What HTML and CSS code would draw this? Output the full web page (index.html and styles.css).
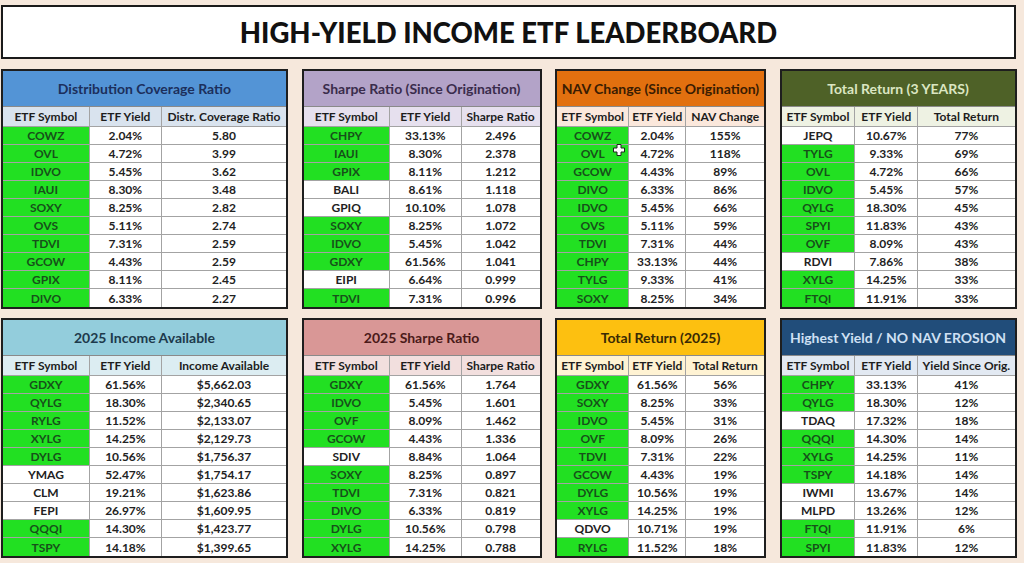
FILE: index.html
```html
<!DOCTYPE html>
<html>
<head>
<meta charset="utf-8">
<link rel="stylesheet" href="styles.css">
</head>
<body>
<div class="page">
  <header class="title-box"><h1>HIGH-YIELD INCOME ETF LEADERBOARD</h1></header>
  <main class="board">
    <section class="card c1 blue">
      <h2>Distribution Coverage Ratio</h2>
      <table>
        <tr class="th"><th>ETF Symbol</th><th>ETF Yield</th><th>Distr. Coverage Ratio</th></tr>
        <tr><td class="g">COWZ</td><td>2.04%</td><td>5.80</td></tr>
        <tr><td class="g">OVL</td><td>4.72%</td><td>3.99</td></tr>
        <tr><td class="g">IDVO</td><td>5.45%</td><td>3.62</td></tr>
        <tr><td class="g">IAUI</td><td>8.30%</td><td>3.48</td></tr>
        <tr><td class="g">SOXY</td><td>8.25%</td><td>2.82</td></tr>
        <tr><td class="g">OVS</td><td>5.11%</td><td>2.74</td></tr>
        <tr><td class="g">TDVI</td><td>7.31%</td><td>2.59</td></tr>
        <tr><td class="g">GCOW</td><td>4.43%</td><td>2.59</td></tr>
        <tr><td class="g">GPIX</td><td>8.11%</td><td>2.45</td></tr>
        <tr><td class="g">DIVO</td><td>6.33%</td><td>2.27</td></tr>
      </table>
    </section>
    <section class="card c2 lavender">
      <h2>Sharpe Ratio (Since Origination)</h2>
      <table>
        <tr class="th"><th>ETF Symbol</th><th>ETF Yield</th><th>Sharpe Ratio</th></tr>
        <tr><td class="g">CHPY</td><td>33.13%</td><td>2.496</td></tr>
        <tr><td class="g">IAUI</td><td>8.30%</td><td>2.378</td></tr>
        <tr><td class="g">GPIX</td><td>8.11%</td><td>1.212</td></tr>
        <tr><td>BALI</td><td>8.61%</td><td>1.118</td></tr>
        <tr><td>GPIQ</td><td>10.10%</td><td>1.078</td></tr>
        <tr><td class="g">SOXY</td><td>8.25%</td><td>1.072</td></tr>
        <tr><td class="g">IDVO</td><td>5.45%</td><td>1.042</td></tr>
        <tr><td class="g">GDXY</td><td>61.56%</td><td>1.041</td></tr>
        <tr><td>EIPI</td><td>6.64%</td><td>0.999</td></tr>
        <tr><td class="g">TDVI</td><td>7.31%</td><td>0.996</td></tr>
      </table>
    </section>
    <section class="card c3 orange">
      <h2>NAV Change (Since Origination)</h2>
      <table>
        <tr class="th"><th>ETF Symbol</th><th>ETF Yield</th><th>NAV Change</th></tr>
        <tr><td class="g">COWZ</td><td>2.04%</td><td>155%</td></tr>
        <tr><td class="g cursor-cell">OVL<svg class="cursor" viewBox="0 0 12 12" width="12" height="12"><path d="M4 0.5h4v3.5h3.5v4h-3.5v3.5h-4v-3.5h-3.5v-4h3.5z" fill="#fff" stroke="#222" stroke-width="1"/></svg></td><td>4.72%</td><td>118%</td></tr>
        <tr><td class="g">GCOW</td><td>4.43%</td><td>89%</td></tr>
        <tr><td class="g">DIVO</td><td>6.33%</td><td>86%</td></tr>
        <tr><td class="g">IDVO</td><td>5.45%</td><td>66%</td></tr>
        <tr><td class="g">OVS</td><td>5.11%</td><td>59%</td></tr>
        <tr><td class="g">TDVI</td><td>7.31%</td><td>44%</td></tr>
        <tr><td class="g">CHPY</td><td>33.13%</td><td>44%</td></tr>
        <tr><td class="g">TYLG</td><td>9.33%</td><td>41%</td></tr>
        <tr><td class="g">SOXY</td><td>8.25%</td><td>34%</td></tr>
      </table>
    </section>
    <section class="card c4 olive">
      <h2>Total Return (3 YEARS)</h2>
      <table>
        <tr class="th"><th>ETF Symbol</th><th>ETF Yield</th><th>Total Return</th></tr>
        <tr><td>JEPQ</td><td>10.67%</td><td>77%</td></tr>
        <tr><td class="g">TYLG</td><td>9.33%</td><td>69%</td></tr>
        <tr><td class="g">OVL</td><td>4.72%</td><td>66%</td></tr>
        <tr><td class="g">IDVO</td><td>5.45%</td><td>57%</td></tr>
        <tr><td class="g">QYLG</td><td>18.30%</td><td>45%</td></tr>
        <tr><td class="g">SPYI</td><td>11.83%</td><td>43%</td></tr>
        <tr><td class="g">OVF</td><td>8.09%</td><td>43%</td></tr>
        <tr><td>RDVI</td><td>7.86%</td><td>38%</td></tr>
        <tr><td class="g">XYLG</td><td>14.25%</td><td>33%</td></tr>
        <tr><td class="g">FTQI</td><td>11.91%</td><td>33%</td></tr>
      </table>
    </section>

    <section class="card c1 teal">
      <h2>2025 Income Available</h2>
      <table>
        <tr class="th"><th>ETF Symbol</th><th>ETF Yield</th><th>Income Available</th></tr>
        <tr><td class="g">GDXY</td><td>61.56%</td><td>$5,662.03</td></tr>
        <tr><td class="g">QYLG</td><td>18.30%</td><td>$2,340.65</td></tr>
        <tr><td class="g">RYLG</td><td>11.52%</td><td>$2,133.07</td></tr>
        <tr><td class="g">XYLG</td><td>14.25%</td><td>$2,129.73</td></tr>
        <tr><td class="g">DYLG</td><td>10.56%</td><td>$1,756.37</td></tr>
        <tr><td>YMAG</td><td>52.47%</td><td>$1,754.17</td></tr>
        <tr><td>CLM</td><td>19.21%</td><td>$1,623.86</td></tr>
        <tr><td>FEPI</td><td>26.97%</td><td>$1,609.95</td></tr>
        <tr><td class="g">QQQI</td><td>14.30%</td><td>$1,423.77</td></tr>
        <tr><td class="g">TSPY</td><td>14.18%</td><td>$1,399.65</td></tr>
      </table>
    </section>
    <section class="card c2 rose">
      <h2>2025 Sharpe Ratio</h2>
      <table>
        <tr class="th"><th>ETF Symbol</th><th>ETF Yield</th><th>Sharpe Ratio</th></tr>
        <tr><td class="g">GDXY</td><td>61.56%</td><td>1.764</td></tr>
        <tr><td class="g">IDVO</td><td>5.45%</td><td>1.601</td></tr>
        <tr><td class="g">OVF</td><td>8.09%</td><td>1.462</td></tr>
        <tr><td class="g">GCOW</td><td>4.43%</td><td>1.336</td></tr>
        <tr><td>SDIV</td><td>8.84%</td><td>1.064</td></tr>
        <tr><td class="g">SOXY</td><td>8.25%</td><td>0.897</td></tr>
        <tr><td class="g">TDVI</td><td>7.31%</td><td>0.821</td></tr>
        <tr><td class="g">DIVO</td><td>6.33%</td><td>0.819</td></tr>
        <tr><td class="g">DYLG</td><td>10.56%</td><td>0.798</td></tr>
        <tr><td class="g">XYLG</td><td>14.25%</td><td>0.788</td></tr>
      </table>
    </section>
    <section class="card c3 gold">
      <h2>Total Return (2025)</h2>
      <table>
        <tr class="th"><th>ETF Symbol</th><th>ETF Yield</th><th>Total Return</th></tr>
        <tr><td class="g">GDXY</td><td>61.56%</td><td>56%</td></tr>
        <tr><td class="g">SOXY</td><td>8.25%</td><td>33%</td></tr>
        <tr><td class="g">IDVO</td><td>5.45%</td><td>31%</td></tr>
        <tr><td class="g">OVF</td><td>8.09%</td><td>26%</td></tr>
        <tr><td class="g">TDVI</td><td>7.31%</td><td>22%</td></tr>
        <tr><td class="g">GCOW</td><td>4.43%</td><td>19%</td></tr>
        <tr><td class="g">DYLG</td><td>10.56%</td><td>19%</td></tr>
        <tr><td class="g">XYLG</td><td>14.25%</td><td>19%</td></tr>
        <tr><td>QDVO</td><td>10.71%</td><td>19%</td></tr>
        <tr><td class="g">RYLG</td><td>11.52%</td><td>18%</td></tr>
      </table>
    </section>
    <section class="card c4 navy">
      <h2>Highest Yield / NO NAV EROSION</h2>
      <table>
        <tr class="th"><th>ETF Symbol</th><th>ETF Yield</th><th>Yield Since Orig.</th></tr>
        <tr><td class="g">CHPY</td><td>33.13%</td><td>41%</td></tr>
        <tr><td class="g">QYLG</td><td>18.30%</td><td>12%</td></tr>
        <tr><td>TDAQ</td><td>17.32%</td><td>18%</td></tr>
        <tr><td class="g">QQQI</td><td>14.30%</td><td>14%</td></tr>
        <tr><td class="g">XYLG</td><td>14.25%</td><td>11%</td></tr>
        <tr><td class="g">TSPY</td><td>14.18%</td><td>14%</td></tr>
        <tr><td>IWMI</td><td>13.67%</td><td>14%</td></tr>
        <tr><td>MLPD</td><td>13.26%</td><td>12%</td></tr>
        <tr><td class="g">FTQI</td><td>11.91%</td><td>6%</td></tr>
        <tr><td class="g">SPYI</td><td>11.83%</td><td>12%</td></tr>
      </table>
    </section>
  </main>
</div>
</body>
</html>
```

FILE: styles.css
```css
* { box-sizing: border-box; }
html, body { margin: 0; padding: 0; }
body {
  background: #f6e8dc;
  font-family: "Lato", "Open Sans", sans-serif;
  color: #1b1b1b;
  width: 1024px;
  height: 563px;
  overflow: hidden;
}
.page {
  padding: 5px 8px 0 1px;
}
.title-box {
  height: 54px;
  background: #fff;
  border: 2px solid #1a1a1a;
  display: flex;
  align-items: center;
  justify-content: center;
}
.title-box h1 {
  margin: 0;
  font-size: 27.5px;
  font-weight: 900;
  color: #111;
  letter-spacing: 0;
}
.board {
  margin-top: 10px;
  display: grid;
  grid-template-columns: 287px 240px 211px 237px;
  grid-template-rows: 240px 240px;
  column-gap: 13.5px;
  row-gap: 9px;
}
.card {
  border: 2px solid #1e1e1e;
  background: #fff;
  display: flex;
  flex-direction: column;
}
.card h2 {
  margin: 0;
  height: 37px;
  display: flex;
  align-items: center;
  justify-content: center;
  font-size: 14px;
  font-weight: 700;
  border-bottom: 1px solid #8a8a8a;
}
table {
  width: 100%;
  border-collapse: collapse;
  table-layout: fixed;
  font-size: 12px;
  font-weight: 700;
}
th, td {
  text-align: center;
  padding: 0;
  border: 1px solid #a3a3a3;
  white-space: nowrap;
  overflow: visible;
}
tr:first-child th { border-top: none; }
th:first-child, td:first-child { border-left: none; }
th:last-child, td:last-child { border-right: none; }
tr:last-child td { border-bottom: none; }
.th th { height: 19px; font-weight: 700; color: #1d1d1d; }
td { height: 18.1px; color: #222; }
td.g { background: #22e022; color: #17501a; }
.cursor-cell { position: relative; }
.cursor {
  position: absolute;
  left: 56px;
  top: -1px;
}

/* column widths */
.c1 th:nth-child(1) { width: 30.5%; }
.c1 th:nth-child(2) { width: 25.5%; }
.c2 th:nth-child(1) { width: 36.4%; }
.c2 th:nth-child(2) { width: 30.4%; }
.c3 th:nth-child(1) { width: 34.7%; }
.c3 th:nth-child(2) { width: 27.5%; }
.c4 th:nth-child(1) { width: 31.5%; }
.c4 th:nth-child(2) { width: 27%; }

/* themes */
.blue h2 { background: #5394d6; color: #1c2f5c; }
.blue .th { background: #d9e3ee; }
.lavender h2 { background: #b3a3c8; color: #3a2c4c; }
.lavender .th { background: #e6e0ee; }
.orange h2 { background: #e2700f; color: #3a1c02; }
.orange .th { background: #fbe8dc; }
.olive h2 { background: #4e6127; color: #dbe6c2; font-weight: 700; }
.olive .th { background: #eef2e3; }
.teal h2 { background: #93cddc; color: #1d3a4c; }
.teal .th { background: #dcedf2; }
.rose h2 { background: #d99796; color: #4b1a19; }
.rose .th { background: #f2dfde; }
.gold h2 { background: #fdc010; color: #3a2a04; }
.gold .th { background: #fff3d3; }
.navy h2 { background: #214d7a; color: #cfe0f4; }
.navy .th { background: #e2e9f2; }
```
